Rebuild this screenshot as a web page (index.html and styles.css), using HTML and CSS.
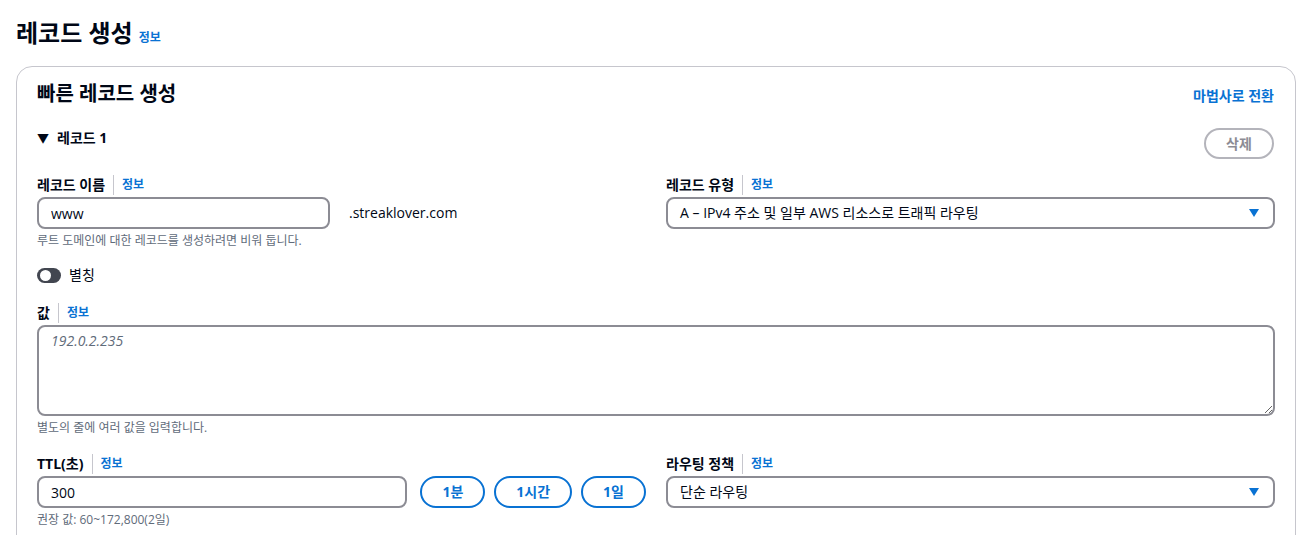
FILE: index.html
```html
<!DOCTYPE html>
<html lang="ko">
<head>
<meta charset="utf-8">
<title>레코드 생성</title>
<link rel="stylesheet" href="styles.css">
</head>
<body>
<div class="page">
  <div class="page-header">
    <h1 class="page-title">레코드 생성</h1>
    <a class="info-link info-title">정보</a>
  </div>

  <section class="container">
    <div class="container-header">
      <h2 class="container-title">빠른 레코드 생성</h2>
      <a class="wizard-link">마법사로 전환</a>
    </div>

    <div class="record">
      <div class="record-header">
        <div class="record-title"><span class="expand-caret">▼</span>레코드 1</div>
        <button class="btn btn-disabled" disabled>삭제</button>
      </div>

      <div class="two-col">
        <div class="field">
          <div class="field-label"><span>레코드 이름</span><span class="divider"></span><a class="info-link">정보</a></div>
          <div class="name-row">
            <input class="input name-input" type="text" value="www">
            <span class="domain">.streaklover.com</span>
          </div>
          <div class="hint">루트 도메인에 대한 레코드를 생성하려면 비워 둡니다.</div>
        </div>
        <div class="field">
          <div class="field-label"><span>레코드 유형</span><span class="divider"></span><a class="info-link">정보</a></div>
          <div class="select">
            <span>A – IPv4 주소 및 일부 AWS 리소스로 트래픽 라우팅</span>
            <svg class="caret" width="10" height="8" viewBox="0 0 10 8"><path d="M0 0 H10 L5 8 Z" fill="#0972d3"/></svg>
          </div>
        </div>
      </div>

      <div class="toggle-row">
        <span class="toggle"><span class="knob"></span></span>
        <span class="toggle-label">별칭</span>
      </div>

      <div class="field">
        <div class="field-label"><span>값</span><span class="divider"></span><a class="info-link">정보</a></div>
        <textarea class="textarea" placeholder="192.0.2.235"></textarea>
        <div class="hint">별도의 줄에 여러 값을 입력합니다.</div>
      </div>

      <div class="two-col">
        <div class="field">
          <div class="field-label"><span>TTL(초)</span><span class="divider"></span><a class="info-link">정보</a></div>
          <div class="ttl-row">
            <input class="input ttl-input" type="text" value="300">
            <div class="ttl-buttons">
              <button class="btn btn-blue">1분</button>
              <button class="btn btn-blue">1시간</button>
              <button class="btn btn-blue">1일</button>
            </div>
          </div>
          <div class="hint">권장 값: 60~172,800(2일)</div>
        </div>
        <div class="field">
          <div class="field-label"><span>라우팅 정책</span><span class="divider"></span><a class="info-link">정보</a></div>
          <div class="select">
            <span>단순 라우팅</span>
            <svg class="caret" width="10" height="8" viewBox="0 0 10 8"><path d="M0 0 H10 L5 8 Z" fill="#0972d3"/></svg>
          </div>
        </div>
      </div>
    </div>
  </section>
</div>
</body>
</html>
```

FILE: styles.css
```css
* { box-sizing: border-box; }

html, body {
  margin: 0;
  padding: 0;
  background: #ffffff;
}

body {
  font-family: "Open Sans", "Noto Sans CJK KR", sans-serif;
  color: #000716;
  font-size: 14px;
  line-height: 20px;
}

.page {
  padding: 18px 5px 0 16px;
}

.page-header {
  display: flex;
  align-items: baseline;
  gap: 6px;
  height: 30px;
}

.page-title {
  margin: 0;
  font-size: 24px;
  line-height: 30px;
  font-weight: 700;
}

.info-link {
  font-size: 12px;
  line-height: 16px;
  font-weight: 700;
  color: #0972d3;
  text-decoration: none;
}

.container {
  margin-top: 18px;
  border: 1px solid #c6c6cd;
  border-radius: 16px;
  padding: 15px 20px 40px 20px;
  height: 520px;
}

.container-header {
  display: flex;
  justify-content: space-between;
  align-items: baseline;
}

.container-title {
  margin: 0;
  font-size: 20px;
  line-height: 24px;
  font-weight: 700;
}

.wizard-link {
  margin-right: 1px;
  font-size: 14px;
  font-weight: 700;
  color: #0972d3;
  text-decoration: none;
}

.record {
  margin-top: 22px;
  display: flex;
  flex-direction: column;
}

.record-header {
  display: flex;
  justify-content: space-between;
  align-items: flex-start;
}

.record-title {
  font-weight: 700;
  font-size: 14px;
  line-height: 20px;
}

.expand-caret {
  display: inline-block;
  font-size: 12px;
  margin-right: 8px;
}

.btn {
  font-family: "Open Sans", "Noto Sans CJK KR", sans-serif;
  font-weight: 700;
  font-size: 14px;
  line-height: 20px;
  background: #ffffff;
  border-radius: 20px;
  padding: 4px 20px;
  height: 32px;
}

.btn-disabled {
  margin-right: 1px;
  width: 70px;
  height: 31px;
  border: 2px solid #b4b4bb;
  color: #8c8c94;
}

.btn-blue {
  border: 2px solid #0972d3;
  color: #0972d3;
}

.two-col {
  display: grid;
  grid-template-columns: 1fr 1fr;
  column-gap: 20px;
}

.record-header + .two-col {
  margin-top: 16px;
}

.field {
  display: flex;
  flex-direction: column;
}

.field-label {
  display: flex;
  align-items: center;
  font-weight: 700;
  font-size: 14px;
  line-height: 20px;
  margin-bottom: 2px;
}

.divider {
  display: inline-block;
  width: 1px;
  height: 20px;
  background: #c6c6cd;
  margin: 0 8px;
}

.name-row {
  display: flex;
  align-items: center;
}

.input {
  font-family: "Open Sans", "Noto Sans CJK KR", sans-serif;
  font-size: 14px;
  color: #000716;
  height: 32px;
  border: 2px solid #8c8c94;
  border-radius: 8px;
  padding: 4px 12px;
  background: #fff;
  outline: none;
}

.name-input {
  width: 293px;
}

.domain {
  margin-left: 19px;
  font-size: 14px;
}

.hint {
  margin-top: 4px;
  font-size: 12px;
  line-height: 16px;
  color: #5f6b7a;
}

.select {
  display: flex;
  align-items: center;
  justify-content: space-between;
  height: 32px;
  border: 2px solid #8c8c94;
  border-radius: 8px;
  padding: 4px 14px 4px 12px;
  font-size: 14px;
}

.caret {
  display: block;
}

.toggle-row {
  margin-top: 16px;
  display: flex;
  align-items: center;
  gap: 8px;
  height: 20px;
}

.toggle {
  position: relative;
  display: inline-block;
  width: 24px;
  height: 15px;
  border-radius: 8px;
  background: #424650;
}

.knob {
  position: absolute;
  left: 3px;
  top: 2px;
  width: 11px;
  height: 11px;
  border-radius: 50%;
  background: #ffffff;
}

.toggle-label {
  font-size: 14px;
}

.toggle-row + .field {
  margin-top: 18px;
}

.textarea {
  display: block;
  width: 100%;
  height: 91px;
  border: 2px solid #8c8c94;
  border-radius: 8px;
  padding: 4px 12px;
  font-family: "Open Sans", "Noto Sans CJK KR", sans-serif;
  font-size: 14px;
  line-height: 20px;
  resize: vertical;
  outline: none;
}

.textarea::placeholder {
  font-style: italic;
  color: #5f6b7a;
}

.field + .two-col {
  margin-top: 18px;
}

.ttl-row {
  display: flex;
  align-items: center;
}

.ttl-input {
  flex: 1;
  min-width: 0;
}

.ttl-buttons {
  display: flex;
  gap: 9px;
  margin-left: 13px;
}
```
